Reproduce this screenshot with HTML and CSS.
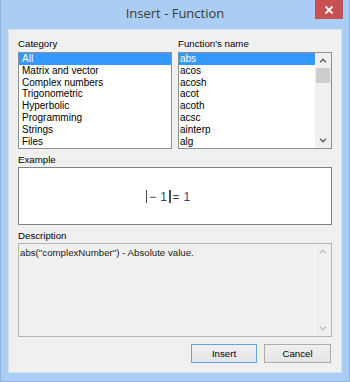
FILE: index.html
```html
<!doctype html>
<html>
<head>
  <meta charset="UTF-8">
  <meta name="viewport" content="width=device-width, initial-scale=1.0">
  <link rel="stylesheet" href="styles.css">
</head>
<body>
  <div class="Window">
    <div class="Window-title">
      Insert - Function
      <div class="Window-close">
        <svg width="10" height="10" viewBox="0 0 10 10"><path d="M1.5 1.5 L8.5 8.5 M8.5 1.5 L1.5 8.5" stroke="#fff" stroke-width="1.8"/></svg>
      </div>
    </div>
    <div class="Window-client">
      <div class="Lists">
        <div class="Field">
          <div class="Field-label">Category</div>
          <div class="Listbox">
            <div class="Listbox-items">
              <div class="Listbox-item is-selected">All</div>
              <div class="Listbox-item">Matrix and vector</div>
              <div class="Listbox-item">Complex numbers</div>
              <div class="Listbox-item">Trigonometric</div>
              <div class="Listbox-item">Hyperbolic</div>
              <div class="Listbox-item">Programming</div>
              <div class="Listbox-item">Strings</div>
              <div class="Listbox-item">Files</div>
            </div>
          </div>
        </div>
        <div class="Field">
          <div class="Field-label">Function's name</div>
          <div class="Listbox">
            <div class="Listbox-items narrow">
              <div class="Listbox-item is-selected">abs</div>
              <div class="Listbox-item">acos</div>
              <div class="Listbox-item">acosh</div>
              <div class="Listbox-item">acot</div>
              <div class="Listbox-item">acoth</div>
              <div class="Listbox-item">acsc</div>
              <div class="Listbox-item">ainterp</div>
              <div class="Listbox-item">alg</div>
            </div>
            <div class="Scrollbar">
              <div class="Scrollbar-btn">
                <svg width="8" height="5" viewBox="0 0 8 5"><path d="M1 4.2 L4 1.2 L7 4.2" fill="none" stroke="#606060" stroke-width="1.5"/></svg>
              </div>
              <div class="Scrollbar-thumb"></div>
              <div class="Scrollbar-track"></div>
              <div class="Scrollbar-btn">
                <svg width="8" height="5" viewBox="0 0 8 5"><path d="M1 0.8 L4 3.8 L7 0.8" fill="none" stroke="#606060" stroke-width="1.5"/></svg>
              </div>
            </div>
          </div>
        </div>
      </div>

      <div class="Field-label spaced">Example</div>
      <div class="Example">
        <span class="Abs"></span><span class="Op minus">−</span><span class="Num">1</span><span class="Abs"></span><span class="Op eq">=</span><span class="Num">1</span>
      </div>

      <div class="Field-label spaced">Description</div>
      <div class="Description">
        <div class="Description-text">abs("complexNumber") - Absolute value.</div>
        <div class="Scrollbar disabled">
          <div class="Scrollbar-btn">
            <svg width="8" height="5" viewBox="0 0 8 5"><path d="M1 4.2 L4 1.2 L7 4.2" fill="none" stroke="#c2c2c2" stroke-width="1.5"/></svg>
          </div>
          <div class="Scrollbar-track"></div>
          <div class="Scrollbar-btn">
            <svg width="8" height="5" viewBox="0 0 8 5"><path d="M1 0.8 L4 3.8 L7 0.8" fill="none" stroke="#c2c2c2" stroke-width="1.5"/></svg>
          </div>
        </div>
      </div>

      <div class="Buttons">
        <button class="Button is-default">Insert</button>
        <button class="Button wide">Cancel</button>
      </div>
    </div>
  </div>
</body>
</html>
```

FILE: styles.css
```css
html, body {
  margin: 0;
  padding: 0;
  font-family: 'Liberation Sans', Arial, Helvetica, sans-serif;
  font-size: 9.7px;
  color: #000;
}

.Window {
  width: 350px;
  height: 382px;
  box-sizing: border-box;
  background-color: #a9cdf3;
  border: 1px solid #8db3dd;
  border-top: none;
  display: flex;
  flex-direction: column;
}

.Window-title {
  position: relative;
  height: 29px;
  line-height: 27px;
  text-align: center;
  font-family: 'Open Sans', 'Noto Sans', sans-serif;
  font-size: 13px;
  color: #3a3a3a;
}

.Window-close {
  position: absolute;
  top: 0;
  right: 6px;
  width: 28px;
  height: 19px;
  background-color: #c75050;
  display: flex;
  align-items: center;
  justify-content: center;
}

.Window-close svg {
  display: block;
}

.Window-client {
  margin: 0 7px;
  height: 344px;
  box-sizing: border-box;
  background-color: #f0f0f0;
  border: 1px solid #d3e0ee;
  padding: 7px 9px 9px 9px;
  display: flex;
  flex-direction: column;
}

.Lists {
  display: flex;
  gap: 6px;
}

.Field {
  width: 154px;
}

.Field-label {
  height: 14px;
  line-height: 14px;
  margin-bottom: 1px;
}

.Field-label.spaced {
  margin: 4px 0 0 0;
}

.Listbox {
  height: 97px;
  box-sizing: border-box;
  border: 1px solid #8e8f94;
  background-color: #fff;
  display: flex;
}

.Listbox-items {
  flex: 1;
  font-size: 10px;
}

.Listbox-item {
  height: 11.8px;
  line-height: 11.8px;
  padding-left: 3px;
  white-space: nowrap;
}

.narrow .Listbox-item {
  padding-left: 1px;
}

.Listbox-item.is-selected {
  background-color: #3399ff;
  color: #fff;
}

.Scrollbar {
  width: 16px;
  background-color: #f0f0f0;
  display: flex;
  flex-direction: column;
}

.Scrollbar.disabled {
  background-color: #f0f0f0;
  border-left: 1px solid #fafafa;
}

.Scrollbar-btn {
  height: 15px;
  display: flex;
  align-items: center;
  justify-content: center;
}

.Scrollbar-btn svg {
  display: block;
}

.Scrollbar-thumb {
  height: 15px;
  margin: 0 1px;
  background-color: #cdcdcd;
}

.Scrollbar-track {
  flex: 1;
}

.Example {
  height: 58px;
  box-sizing: border-box;
  border: 1px solid #828282;
  background-color: #fff;
  display: flex;
  align-items: center;
  justify-content: center;
  font-size: 12px;
  padding: 1px 12px 0 0;
}

.Abs {
  display: inline-block;
  width: 1.5px;
  height: 13px;
  background-color: #4a4a4a;
}

.Op {
  color: #3a3a3a;
}

.Op.minus {
  margin: 0 4px 0 2px;
}

.Op.eq {
  margin: 0 4px 0 2px;
}

.Num {
  color: #29467a;
  margin-right: 2px;
}

.Description {
  height: 94px;
  box-sizing: border-box;
  border: 1px solid #b4b4b4;
  background-color: #f0f0f0;
  display: flex;
}

.Description-text {
  flex: 1;
  padding: 3px 0 0 1px;
  line-height: 12px;
  color: #1a1a1a;
}

.Buttons {
  margin-top: 7px;
  display: flex;
  justify-content: flex-end;
  gap: 7px;
  padding-right: 1px;
}

.Button {
  width: 66px;
  height: 19px;
  box-sizing: border-box;
  padding: 0;
  border: 1px solid #acacac;
  background: linear-gradient(#f0f0f0, #e5e5e5);
  font-family: 'Liberation Sans', Arial, sans-serif;
  font-size: 9.7px;
  color: #000;
}

.Button.wide {
  width: 67px;
}

.Button.is-default {
  border-color: #5ea4ea;
}
```
